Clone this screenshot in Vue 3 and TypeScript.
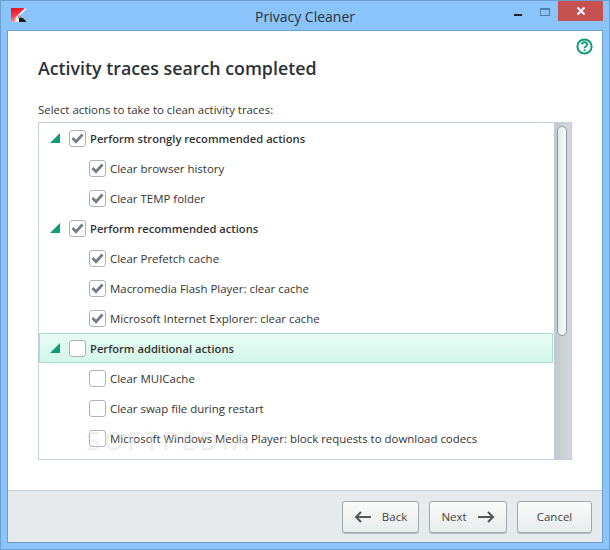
<script setup lang="ts">
interface Row { label: string; checked: boolean; group?: boolean; active?: boolean }
const rows: Row[] = [
  { label: 'Perform strongly recommended actions', checked: true, group: true },
  { label: 'Clear browser history', checked: true },
  { label: 'Clear TEMP folder', checked: true },
  { label: 'Perform recommended actions', checked: true, group: true },
  { label: 'Clear Prefetch cache', checked: true },
  { label: 'Macromedia Flash Player: clear cache', checked: true },
  { label: 'Microsoft Internet Explorer: clear cache', checked: true },
  { label: 'Perform additional actions', checked: false, group: true, active: true },
  { label: 'Clear MUICache', checked: false },
  { label: 'Clear swap file during restart', checked: false },
  { label: 'Microsoft Windows Media Player: block requests to download codecs', checked: false },
]
</script>

<template>
  <div class="window">
    <header class="titlebar">
      <svg class="logo" width="15" height="14" viewBox="0 0 15 14">
        <defs>
          <linearGradient id="kred" x1="0.2" y1="0" x2="0.5" y2="1">
            <stop offset="0" stop-color="#e50e20" />
            <stop offset="0.55" stop-color="#f2404f" />
            <stop offset="1" stop-color="#fbb4ba" />
          </linearGradient>
          <linearGradient id="kgrey" x1="0" y1="0" x2="1" y2="1">
            <stop offset="0" stop-color="#d8d8d8" />
            <stop offset="1" stop-color="#555" />
          </linearGradient>
        </defs>
        <path d="M0 0h15v1l-6 6 6 6v1H0z" fill="#fff" />
        <path d="M0 0h14L4.5 9.5V14H0z" fill="url(#kred)" />
        <path d="M6 9l2.500-2.500 3 3L9 12z" fill="url(#kgrey)" />
        <path d="M8 10h4l3 3v1H8z" fill="#1c1c1c" />
      </svg>
      <span class="title">Privacy Cleaner</span>
      <div class="controls">
        <span class="min"></span>
        <span class="max"></span>
        <span class="close">
          <svg width="10" height="10" viewBox="0 0 10 10"><path d="M1.5 1.5l7 7M8.5 1.5l-7 7" stroke="#fff" stroke-width="2" /></svg>
        </span>
      </div>
    </header>
    <main class="content">
      <div class="body">
        <svg class="help" width="17" height="17" viewBox="0 0 17 17">
          <circle cx="8.5" cy="8.5" r="7.1" fill="none" stroke="#0f9d78" stroke-width="2" />
          <path d="M6 6.6c0-3.2 5-3.2 5 0 0 2-2.5 2-2.5 3.6" fill="none" stroke="#0f9d78" stroke-width="1.8" />
          <rect x="7.6" y="11.3" width="1.8" height="1.8" fill="#0f9d78" />
        </svg>
        <h1>Activity traces search completed</h1>
        <p class="hint">Select actions to take to clean activity traces:</p>
        <div class="listbox">
          <ul class="list">
            <li v-for="row in rows" :key="row.label" class="row" :class="{ group: row.group, active: row.active }">
              <span v-if="row.group" class="tri"></span>
              <span class="box">
                <svg v-if="row.checked" width="13" height="11" viewBox="0 0 13 11"><path d="M1.5 5l3.5 3.7 6.5-7.2" fill="none" stroke="#737e85" stroke-width="2.8" /></svg>
              </span>
              <span class="label">{{ row.label }}</span>
            </li>
          </ul>
          <div class="track"><div class="thumb"></div></div>
          <span class="mark">SOFTPEDIA</span>
        </div>
      </div>
      <footer class="footer">
        <button class="btn back">
          <svg width="18" height="12" viewBox="0 0 18 12"><path d="M17 6H2M7 1L2 6l5 5" fill="none" stroke="#555" stroke-width="2" /></svg>
          <span>Back</span>
        </button>
        <button class="btn next">
          <span>Next</span>
          <svg width="18" height="12" viewBox="0 0 18 12"><path d="M1 6h15M11 1l5 5-5 5" fill="none" stroke="#555" stroke-width="2" /></svg>
        </button>
        <button class="btn cancel"><span>Cancel</span></button>
      </footer>
    </main>
  </div>
</template>

<style>
html, body { margin: 0; background: #8ac4fb; }
</style>

<style scoped>
.window {
  width: 610px; height: 550px; box-sizing: border-box;
  background: #8ac4fb; border: 1px solid #6b9fd0;
  display: flex; flex-direction: column;
  padding: 0 6px 6px;
  font-family: "Open Sans", "Noto Sans", sans-serif;
  color: #333;
}
.titlebar { height: 29px; display: flex; align-items: center; position: relative; justify-content: center; flex: none; }
.logo { position: absolute; left: 4px; top: 7px; }
.title { font-size: 14px; color: #2b3238; margin-top: 1px; font-family: "Open Sans", sans-serif; }
.controls { position: absolute; right: 0; top: 0; display: flex; align-items: flex-start; }
.min { width: 8px; height: 2px; background: #222; margin: 13px 18px 0 0; }
.max { width: 8px; height: 5px; border: 1px solid #4f7fa8; border-top-width: 2px; margin: 7px 8px 0 0; }
.close { width: 45px; height: 20px; background: #c75050; display: flex; align-items: center; justify-content: center; }
.content { flex: 1; min-height: 0; display: flex; flex-direction: column; background: #fff; border: 1px solid #6b9fd0; }
.body { flex: 1; min-height: 0; position: relative; padding: 0 30px; }
.help { position: absolute; right: 9px; top: 7px; }
h1 { margin: 24px 0 0; font-size: 17.8px; line-height: 26px; font-weight: 600; color: #2b3238; }
.hint { margin: 20px 0 0; font-size: 11.4px; line-height: 18px; color: #333; }
.listbox { position: relative; margin-top: 3px; width: 534px; height: 338px; box-sizing: border-box; border: 1px solid #c5d0d8; display: flex; overflow: hidden; }
.list { list-style: none; margin: 0 1px 0 0; padding: 0; flex: 1; min-width: 0; }
.row { height: 30px; box-sizing: border-box; display: flex; align-items: center; padding-left: 50px; font-size: 11.45px; position: relative; border: 1px solid transparent; border-left: 0; border-right: 0; }
.row.group { padding-left: 30px; font-weight: 600; font-size: 11.2px; }
.row.active { background: linear-gradient(#e9fbf5, #d3f7ea); border: 1px solid #a6e0cc; padding-left: 29px; }
.tri { position: absolute; left: 11px; top: 9px; width: 0; height: 0; border-left: 10px solid transparent; border-bottom: 10px solid #0f9d78; }
.row.active .tri { left: 10px; }
.box { width: 15px; height: 15px; border: 1px solid #aab4b6; border-radius: 3px; background: #fff; display: flex; align-items: center; justify-content: center; margin-right: 4px; flex: none; }
.label { white-space: nowrap; }
.track { width: 17px; flex: none; background: linear-gradient(90deg, #c0c9d0, #d2d8dc); position: relative; }
.thumb { position: absolute; left: 3px; top: 3px; width: 8px; height: 208px; border: 1px solid #8d9a9c; border-radius: 5px; background: linear-gradient(90deg, #e4ecea, #f8faf9); }
.mark { position: absolute; left: 46px; top: 298px; font-size: 26px; letter-spacing: 3.5px; color: rgba(255, 255, 255, 0.3); text-shadow: 1px 1px 1px rgba(170, 175, 180, 0.3); pointer-events: none; }
.footer { height: 52px; flex: none; box-sizing: border-box; border-top: 1px solid #c5d0d8; background: #e6eaed; display: flex; align-items: center; justify-content: flex-end; padding: 0 10px 0 0; gap: 10px; }
.btn { height: 32px; box-sizing: border-box; border: 1px solid #a0a8ac; border-radius: 3px; background: linear-gradient(#fafbfb, #e8ecec); box-shadow: 0 1px 0 #b8bec2; display: flex; align-items: center; justify-content: center; gap: 10px; font: inherit; font-size: 11.5px; color: #444; padding: 0; }
.back { width: 77px; }
.next { width: 78px; }
.cancel { width: 75px; }
</style>
